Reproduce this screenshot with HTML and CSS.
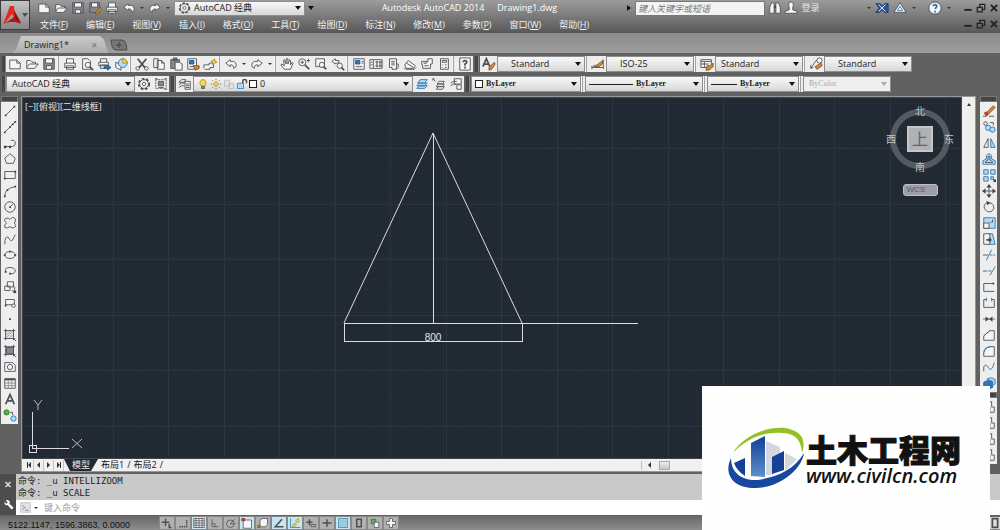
FILE: index.html
```html
<!DOCTYPE html>
<html lang="zh-CN">
<head>
    <meta charset="UTF-8">
    <meta name="viewport" content="width=device-width, initial-scale=1.0">
    <title>Autodesk AutoCAD 2014 Drawing1.dwg</title>
    <link rel="stylesheet" href="styles.css">
</head>
<body>
    <svg class="sprite" aria-hidden="true">
        <!-- file -->
        <symbol id="new" viewBox="0 0 16 16"><path class="w" d="M2 13.500V3.500H10L14 7V13.500Z"/><path d="M10 3.500V7H14"/></symbol>
        <symbol id="open" viewBox="0 0 16 16"><path class="w" d="M2 12V4H6L8 6H12V8M2 12L5 8H15L11 13H2Z"/></symbol>
        <symbol id="save" viewBox="0 0 16 16"><path class="g" d="M2 2H14V14H2Z"/><path class="w" d="M4 2H12V7H4ZM5 10H11V14H5Z"/></symbol>
        <symbol id="saveas" viewBox="0 0 16 16"><path class="g" d="M2 2H13V13H2Z"/><path class="w" d="M4 2H11V7H4Z"/><path class="o" d="M8 14L14 7L16 9L10 15Z"/></symbol>
        <symbol id="print" viewBox="0 0 16 16"><path class="w" d="M4 7V2H12V7M2 7H14V12H2ZM4 10H12V14H4Z"/></symbol>
        <symbol id="preview" viewBox="0 0 16 16"><path class="w" d="M3 14V2H9L12 5V14Z"/><circle class="w" cx="9" cy="9" r="3"/><path class="t" d="M11 11L15 15"/></symbol>
        <symbol id="publish" viewBox="0 0 16 16"><path class="w" d="M4 6V2H11V6M2 6H13V10H2ZM4 9H11V13H4Z"/><path class="bl" d="M8 11H12V9L16 12L12 15V13H8Z"/></symbol>
        <symbol id="globe" viewBox="0 0 16 16"><path class="w" d="M2 6L8 9V15L2 12Z"/><circle class="b" cx="10" cy="7" r="5"/><path class="y" d="M10 7V2A5 5 0 0 1 15 7Z"/></symbol>
        <!-- edit -->
        <symbol id="cut" viewBox="0 0 16 16"><path class="t" d="M3 2L12 13M13 2L4 13"/><circle class="w" cx="3" cy="13" r="2"/><circle class="w" cx="13" cy="13" r="2"/></symbol>
        <symbol id="copy" viewBox="0 0 16 16"><path class="w" d="M2 2H7V12H2ZM6 4H11L14 7V14H6Z"/><path d="M11 4V7H14"/></symbol>
        <symbol id="paste" viewBox="0 0 16 16"><path class="g" d="M2 3H12V13H2ZM5 1H9V4H5Z"/><path class="w" d="M7 6H12L15 8V15H7Z"/></symbol>
        <symbol id="match" viewBox="0 0 16 16"><path class="w" d="M2 2H12V14H2Z"/><path class="bl" d="M4 4H9V8H4Z"/><path d="M4 11H9"/><path class="o" d="M8 10H15V13L11 15Z"/></symbol>
        <symbol id="block" viewBox="0 0 16 16"><path class="w" d="M1 13V9H7V7H12V12H8V14H2"/><path class="y" d="M13 2L14 5L16 6L13 7L11 9L11 6L9 5L12 4Z"/></symbol>
        <symbol id="undo" viewBox="0 0 16 16"><path class="w" d="M2 7L7 3V5H11Q14 6 14 9Q14 12 11 13Q12 9 7 9V11Z"/></symbol>
        <symbol id="redo" viewBox="0 0 16 16"><path class="w" d="M14 7L9 3V5H5Q2 6 2 9Q2 12 5 13Q4 9 9 9V11Z"/></symbol>
        <symbol id="pan" viewBox="0 0 16 16"><path class="w" d="M5 14L1 9L2 8L5 10L4 4L5 3L7 8V2H9V8L11 3L12 4V9L14 6L15 7L12 14Z"/></symbol>
        <symbol id="zoom" viewBox="0 0 16 16"><circle class="w" cx="6" cy="6" r="4"/><path class="t" d="M9 9L14 14"/><path d="M4 6H8M6 4V8M11 4H15M13 2V6"/></symbol>
        <symbol id="zoomwin" viewBox="0 0 16 16"><path class="w" d="M2 2H12V11H2Z"/><circle class="w" cx="9" cy="9" r="3"/><path class="t" d="M11 11L14 14"/></symbol>
        <symbol id="zoomprev" viewBox="0 0 16 16"><path class="w" d="M1 5L5 2V4H9V7H5V8Z"/><circle class="w" cx="10" cy="10" r="3"/><path class="t" d="M12 12L15 15"/></symbol>
        <!-- palettes -->
        <symbol id="props" viewBox="0 0 16 16"><path class="w" d="M2 2H14V14H2Z"/><path class="bl" d="M4 4H9V8H4Z"/><path d="M4 11H12M11 5H13M11 7H13"/></symbol>
        <symbol id="dcenter" viewBox="0 0 16 16"><path class="w" d="M1 3H15V13H1Z"/><path d="M5 3V13M8 5H10V7H8ZM12 5H14V7H12ZM8 9H10V11H8ZM12 9H14V11H12ZM2 6H4M2 9H4"/></symbol>
        <symbol id="tools" viewBox="0 0 16 16"><path class="w" d="M4 2H12V14H7V12H4Z"/><path d="M6 5H10M6 7H10M6 9H10M12 8H14V12L12 14"/></symbol>
        <symbol id="sheets" viewBox="0 0 16 16"><path class="w" d="M2 9L6 4L14 10L12 13H4Z"/><path d="M4 7L12 12M1 12L3 14H13L15 12"/></symbol>
        <symbol id="markup" viewBox="0 0 16 16"><path class="w" d="M2 5H9V2H14V8H12V13H3V9H2Z"/><path d="M5 10H10M9 5L6 8M4 7H7"/></symbol>
        <symbol id="calc" viewBox="0 0 16 16"><path class="w" d="M4 2H13V14H4Z"/><path d="M6 4H11V6H6ZM6 9H7M9 9H11M6 12H7M9 12H11"/></symbol>
        <symbol id="help" viewBox="0 0 16 16"><path class="w" d="M2 1H14V15H2Z"/><path class="t" d="M6 6Q6 4 8 4Q10 4 10 6Q10 7 8 8V10M8 11V13"/></symbol>
        <symbol id="textstyle" viewBox="0 0 16 16"><path class="t" d="M1 11L5 2L9 11M3 8H7"/><path class="o" d="M8 12L14 6L15 8L11 14L8 15Z"/></symbol>
        <symbol id="dimstyle" viewBox="0 0 16 16"><path d="M1 12H14M1 10V14M14 3V14M2 11L5 9"/><path class="o" d="M4 11L11 6L13 4V8L9 11Z"/></symbol>
        <symbol id="tablestyle" viewBox="0 0 16 16"><path class="w" d="M1 3H13V12H1Z"/><path d="M1 5H13M1 8H10M5 5V12"/><path class="o" d="M8 10H12L15 7V11L10 15H7Z"/></symbol>
        <symbol id="leader" viewBox="0 0 16 16"><path d="M2 13L8 4H10M2 13V9M2 13L5 12"/><circle class="w" cx="12" cy="4" r="3"/><path class="o" d="M7 11L14 7L15 10L9 14Z"/></symbol>
        <!-- layers -->
        <symbol id="gear" viewBox="0 0 16 16"><circle cx="8" cy="8" r="6" stroke-dasharray="3 2" stroke-width="2"/><circle class="w" cx="8" cy="8" r="5"/><circle cx="8" cy="8" r="2"/></symbol>
        <symbol id="wsave" viewBox="0 0 16 16"><path stroke-dasharray="2 1" d="M2 3H14V13H2Z"/><path class="g" d="M5 5H11V10H5Z"/><path d="M1 2H4M12 2H15M12 14H15M5 12H11"/></symbol>
        <symbol id="layers" viewBox="0 0 16 16"><path class="w" d="M1 6L4 3H9L7 6ZM1 9L4 7H8M1 12L4 10H7M8 5H14V14H8Z"/><path d="M9 8H13M9 10H13M9 12H13"/></symbol>
        <symbol id="bulb" viewBox="0 0 16 16"><path class="y" d="M6 11Q3 8 4 5Q5 2 8 2Q11 2 12 5Q13 8 10 11Z"/><path class="g" d="M6 11H10V14H6Z"/></symbol>
        <symbol id="sun" viewBox="0 0 16 16"><circle class="y" cx="8" cy="8" r="3"/><path d="M8 1V3M8 13V15M1 8H3M13 8H15M3 3L4 4M12 12L13 13M13 3L12 4M3 13L4 12"/></symbol>
        <symbol id="vpfreeze" viewBox="0 0 16 16"><path class="f" d="M2 3H9V11H2ZM8 7H14V14H8Z"/></symbol>
        <symbol id="lock" viewBox="0 0 16 16"><path class="b" d="M2 7H10V14H2Z"/><path class="t" d="M9 7V4Q9 2 11 2Q14 2 14 4V7"/></symbol>
        <symbol id="layset" viewBox="0 0 16 16"><path class="b" d="M2 13L5 10H14L11 13ZM2 10L5 7H14L11 10ZM3 7L6 3H14L11 7Z"/></symbol>
        <symbol id="layprev" viewBox="0 0 16 16"><path class="w" d="M5 14L7 11H14L12 14ZM5 11L7 8H14L12 11ZM6 8L8 5H14L12 8Z"/><path d="M1 2L4 5M1 2V4M1 2H3"/></symbol>
        <symbol id="laystate" viewBox="0 0 16 16"><path class="w" d="M2 7L5 5H9M2 10L5 8H8M6 2H14V8H6ZM9 9H14V14H9Z"/></symbol>
        <!-- draw -->
        <symbol id="line" viewBox="0 0 16 16"><path d="M3 13L13 3"/><path class="d" d="M2 12H4V14H2ZM12 2H14V4H12Z"/></symbol>
        <symbol id="xline" viewBox="0 0 16 16"><path d="M2 14L14 2"/><path class="d" d="M1 13H3V15H1ZM7 7H9V9H7ZM13 1H15V3H13ZM10 4H12V6H10Z"/></symbol>
        <symbol id="pline" viewBox="0 0 16 16"><path d="M2 12H11Q14 12 14 8Q14 4 9 5"/><path class="d" d="M1 11H4V14H1ZM7 11H9V14H7Z"/></symbol>
        <symbol id="polygon" viewBox="0 0 16 16"><path d="M8 2L14 7L12 13H4L2 7Z"/></symbol>
        <symbol id="rect" viewBox="0 0 16 16"><path d="M2 4H14V12H2Z"/><path class="d" d="M1 11H3V13H1ZM13 3H15V5H13Z"/></symbol>
        <symbol id="arc" viewBox="0 0 16 16"><path d="M2 14Q2 5 14 3"/><path class="d" d="M1 13H3V15H1ZM4 6H6V8H4ZM13 2H15V4H13Z"/></symbol>
        <symbol id="circle" viewBox="0 0 16 16"><circle cx="8" cy="8" r="6"/><path d="M8 8L12 4"/><path class="d" d="M7 7H9V9H7Z"/></symbol>
        <symbol id="cloud" viewBox="0 0 16 16"><path d="M8 4Q11 0 14 3Q15 6 13 8Q16 12 13 13Q10 15 8 12Q4 15 2 13Q1 10 4 8Q0 4 3 3Q6 1 8 4Z"/></symbol>
        <symbol id="spline" viewBox="0 0 16 16"><path d="M2 14Q2 4 6 6Q9 12 11 9L14 3"/></symbol>
        <symbol id="ellipse" viewBox="0 0 16 16"><ellipse cx="8" cy="8" rx="6" ry="4"/><path class="d" d="M1 7H3V9H1ZM7 3H9V5H7ZM13 7H15V9H13Z"/></symbol>
        <symbol id="earc" viewBox="0 0 16 16"><path d="M3 9Q1 4 8 4Q14 4 14 8Q13 12 8 11"/><path class="d" d="M7 10H9V12H7ZM2 8H4V10H2Z"/></symbol>
        <symbol id="insert" viewBox="0 0 16 16"><path class="w" d="M5 2H12V8H5ZM2 7H8V12H2Z"/><path d="M11 6Q15 8 13 12M10 12L14 14"/><path class="d" d="M12 12H15V15H12Z"/></symbol>
        <symbol id="makeblock" viewBox="0 0 16 16"><path class="w" d="M3 11V4H13V10H3"/><circle class="w" cx="12" cy="11" r="2"/><path class="d" d="M2 10H4V12H2Z"/></symbol>
        <symbol id="point" viewBox="0 0 16 16"><path class="d" d="M7 7H9V9H7Z"/></symbol>
        <symbol id="hatch" viewBox="0 0 16 16"><path class="f" d="M3 3H12V12H3Z"/><path d="M3 1V14M12 1V14M1 3H14M1 12H14M12 12L15 15"/><path stroke="#999" d="M4 8L8 4M4 11L11 4M8 11L11 8"/></symbol>
        <symbol id="gradient" viewBox="0 0 16 16"><path class="g" d="M4 4H12V11H4Z"/><path d="M3 1V14M12 1V14M1 3H14M1 12H14M12 12L15 15"/></symbol>
        <symbol id="region" viewBox="0 0 16 16"><path class="w" d="M2 13V3H11L14 6V13Z"/><circle class="w" cx="8" cy="8" r="3"/></symbol>
        <symbol id="table" viewBox="0 0 16 16"><path class="w" d="M2 3H14V14H2Z"/><path stroke-width="2" d="M2 4H14"/><path stroke="#888" d="M2 8H14M2 11H14M6 5V14M10 5V14"/></symbol>
        <symbol id="mtext" viewBox="0 0 16 16"><path stroke-width="2" d="M3 14L8 3L13 14M5 10H11"/></symbol>
        <symbol id="addsel" viewBox="0 0 16 16"><circle class="gr" cx="4" cy="5" r="3"/><circle class="b" cx="12" cy="12" r="3"/><path d="M8 5H11V8"/></symbol>
        <!-- modify -->
        <symbol id="erase" viewBox="0 0 16 16"><path class="o" d="M4 11L13 2L15 4L7 12Z"/><path class="r" d="M3 10L5 9L7 11L6 13L4 13Z"/><path d="M1 14H5M8 14H14"/></symbol>
        <symbol id="copies" viewBox="0 0 16 16"><circle class="b" cx="7" cy="9" r="3"/><circle class="b" cx="12" cy="11" r="3"/><circle cx="4" cy="4" r="2"/><path d="M9 3H13V6"/></symbol>
        <symbol id="mirror" viewBox="0 0 16 16"><path class="w" d="M7 3V13H2Z"/><path class="b" d="M10 3V13H15Z"/></symbol>
        <symbol id="offset" viewBox="0 0 16 16"><path class="b" d="M1 14V10L5 8V4Q8 0 11 4V8L15 10V14Z"/><path d="M4 12V11L7 9V5H9V9L12 11V12Z"/></symbol>
        <symbol id="array" viewBox="0 0 16 16"><path class="b" d="M2 2H7V7H2ZM10 2H15V7H10ZM2 10H7V15H2Z"/><path class="b" d="M10 10H13V13H10Z"/><path class="d" d="M13 13H16V16H13Z"/></symbol>
        <symbol id="move" viewBox="0 0 16 16"><path d="M8 2V14M2 8H14"/><path class="d" d="M8 0L11 4H5ZM8 16L11 12H5ZM0 8L4 5V11ZM16 8L12 5V11Z"/></symbol>
        <symbol id="rotate" viewBox="0 0 16 16"><path d="M6 3Q1 5 3 10Q6 15 11 13Q15 10 13 6Q12 4 9 3"/><path class="d" d="M5 1L10 3L6 6Z"/></symbol>
        <symbol id="scale" viewBox="0 0 16 16"><path class="b" d="M2 2H15V14H2Z"/><path class="w" d="M2 8H8V14H2ZM9 7H12V4"/></symbol>
        <symbol id="stretch" viewBox="0 0 16 16"><path class="b" d="M7 2H12L15 14H7Z"/><path class="w" d="M2 2H9V14H2Z"/><path class="t" d="M5 9H10M8 7L10 9L8 11"/></symbol>
        <symbol id="trim" viewBox="0 0 16 16"><path d="M1 8H7"/><path class="bs" d="M5 14L11 2"/><path class="bs" d="M9 8H15" stroke-dasharray="3 1"/></symbol>
        <symbol id="extend" viewBox="0 0 16 16"><path d="M1 8H6"/><path class="bs" d="M7 8H11M9 13L15 3"/></symbol>
        <symbol id="break1" viewBox="0 0 16 16"><path d="M13 4H2V13H14"/><path class="d" d="M12 3H14V5H12Z"/></symbol>
        <symbol id="break2" viewBox="0 0 16 16"><path d="M5 4H2V13H14V4H11"/><path class="bs" d="M5 2V6M11 2V6"/></symbol>
        <symbol id="join" viewBox="0 0 16 16"><path class="bs" d="M1 8H15"/><path class="d" d="M4 5L8 8L4 11ZM12 5L8 8L12 11Z"/></symbol>
        <symbol id="chamfer" viewBox="0 0 16 16"><path class="w" d="M2 14V9L9 3H14V14Z"/><path class="bs" d="M2 9L9 3"/></symbol>
        <symbol id="fillet" viewBox="0 0 16 16"><path class="w" d="M2 14V10Q3 3 11 3H14V14Z"/><path class="bs" d="M2 10Q3 3 11 3"/></symbol>
        <symbol id="blend" viewBox="0 0 16 16"><path d="M2 13V8Q4 4 6 7"/><path class="bs" d="M6 7Q9 13 12 9L14 3"/></symbol>
        <symbol id="explode" viewBox="0 0 16 16"><path class="bl" d="M2 7L7 5L12 7V13L7 15L2 13Z"/><path class="b" d="M6 3L11 2L15 4V9L12 11V6L6 4Z"/></symbol>
        <symbol id="order" viewBox="0 0 16 16"><path class="w" d="M2 8H9V14H14V8H11V2H6V8"/></symbol>
        <!-- info center -->
        <symbol id="binoc" viewBox="0 0 16 16"><path class="w" d="M2 14V7L4 2H7V14ZM9 14V2H12L14 7V14Z"/><path class="d" d="M7 5H9V8H7Z"/></symbol>
        <symbol id="user" viewBox="0 0 16 16"><path class="w" d="M1 14V12L6 10V8Q4 1 8 1Q12 1 10 8V10L15 12V14Z"/></symbol>
        <symbol id="exchange" viewBox="0 0 16 16"><path class="navy" d="M1 3H6L8 6L11 3H15V13H11L8 10L5 13H1L5 8Z"/><path stroke="#fff" d="M4 4L12 12M12 4L4 12"/></symbol>
        <symbol id="a360" viewBox="0 0 16 16"><path class="w" d="M8 2L15 13H1Z"/><path class="bs" d="M8 6L11 11H5Z"/></symbol>
        <symbol id="qmark" viewBox="0 0 16 16"><circle class="w" cx="8" cy="8" r="7"/><path class="bs" stroke-width="2" d="M6 6Q6 4 8 4Q10 4 10 6Q10 7 8 9M8 11V13"/></symbol>
        <symbol id="min" viewBox="0 0 16 16"><path stroke-width="3" d="M2 11H14"/></symbol>
        <symbol id="restore" viewBox="0 0 16 16"><path stroke-width="2" d="M2 7H10V14H2ZM6 6V2H14V10H11"/></symbol>
        <symbol id="close" viewBox="0 0 16 16"><path stroke-width="3" d="M3 3L13 13M13 3L3 13"/></symbol>
        <symbol id="wrench" viewBox="0 0 16 16"><path fill="#fff" stroke="none" d="M2 4L5 7L7 5L4 2Q8 0 10 4Q10 6 9 7L15 12Q15 15 12 15L7 9Q2 10 2 4Z"/></symbol>
        <symbol id="prompt" viewBox="0 0 16 16"><path class="f" d="M1 1H15V15H1Z"/><path stroke="#446" d="M4 5L7 8L4 11M8 12H12"/></symbol>
        <!-- status -->
        <symbol id="infer" viewBox="0 0 16 16"><path class="t" d="M6 2V12M1 7H11M11 9V14H14"/></symbol>
        <symbol id="snap" viewBox="0 0 16 16"><path class="t" d="M3 13H13V4" stroke-dasharray="2 1"/></symbol>
        <symbol id="gridi" viewBox="0 0 16 16"><path class="w" d="M1 2H15V14H1Z"/><path d="M1 5H15M1 8H15M1 11H15M4 2V14M8 2V14M12 2V14"/></symbol>
        <symbol id="ortho" viewBox="0 0 16 16"><path d="M4 3V13H13M4 9H8V13"/></symbol>
        <symbol id="polar" viewBox="0 0 16 16"><circle cx="7" cy="9" r="5"/><path d="M7 9L13 3M7 9H14"/></symbol>
        <symbol id="osnap" viewBox="0 0 16 16"><path class="w" d="M3 4H14V15H3Z"/><path class="r" d="M1 2H5V5H1Z"/></symbol>
        <symbol id="osnap3" viewBox="0 0 16 16"><path class="w" d="M4 4L7 2H14V10L11 13H4Z"/><path class="o" d="M1 11H4V14H1Z"/></symbol>
        <symbol id="otrack" viewBox="0 0 16 16"><path class="t" d="M12 3L3 13H14"/></symbol>
        <symbol id="ducs" viewBox="0 0 16 16"><path class="bs" d="M2 2V14H15"/><path class="y" d="M4 12L8 8L10 10L6 13ZM9 5L12 2L14 5L11 8Z"/></symbol>
        <symbol id="dyn" viewBox="0 0 16 16"><path class="t" d="M6 3V11M2 7H10"/><path d="M8 10H14V13H8Z"/></symbol>
        <symbol id="lwt" viewBox="0 0 16 16"><path stroke-width="2" d="M8 3V13M2 8H14"/></symbol>
        <symbol id="tpy" viewBox="0 0 16 16"><path class="b" d="M2 2H14V14H2Z"/><path d="M2 5H14M2 8H14M2 11H14M5 2V14M8 2V14M11 2V14" stroke="#8bc"/></symbol>
        <symbol id="qp" viewBox="0 0 16 16"><path class="t" d="M5 3H11V13H5Z"/></symbol>
        <symbol id="sc" viewBox="0 0 16 16"><path class="gr" d="M3 3H9V9H3Z"/><path class="w" d="M7 7H13V14H7Z"/></symbol>
        <symbol id="am" viewBox="0 0 16 16"><path class="w" d="M6 2H10V6H14V10H10V14H6V10H2V6H6Z"/></symbol>
    </svg>

    <header class="titlebar">
        <button class="app-btn" aria-label="应用程序">
            <svg class="app-logo" viewBox="0 0 18 20"><path fill="#8e0f0c" d="M9 1L18 18L12 15L9 8Z"/><path fill="#e3291d" d="M7 1H11L12 13L9 9L1 19Q0 19 1 17Z"/><path fill="#b8150f" d="M1 19L11 12L18 19L12 17H6Z"/></svg>
            <span class="caret blue"></span>
        </button>
        <div class="title-rows">
            <div class="title-row">
                <div class="quick">
                    <button aria-label="新建"><svg><use href="#new"/></svg></button>
                    <button aria-label="打开"><svg><use href="#open"/></svg></button>
                    <button aria-label="保存"><svg><use href="#save"/></svg></button>
                    <button aria-label="另存为"><svg><use href="#saveas"/></svg></button>
                    <button aria-label="打印"><svg><use href="#print"/></svg></button>
                    <button aria-label="放弃"><svg><use href="#undo"/></svg></button>
                    <span class="drop"></span>
                    <button aria-label="重做"><svg><use href="#redo"/></svg></button>
                    <span class="drop"></span>
                </div>
                <div class="combo title-combo">
                    <svg><use href="#gear"/></svg>
                    <select aria-label="工作空间"><option>AutoCAD 经典</option></select>
                </div>
                <button class="more" aria-label="自定义"><span class="caret"></span></button>
                <h1><span>Autodesk AutoCAD 2014</span><span>Drawing1.dwg</span></h1>
                <span class="play"></span>
                <input class="search" type="text" placeholder="键入关键字或短语" aria-label="键入关键字或短语">
                <div class="info">
                    <button aria-label="搜索"><svg><use href="#binoc"/></svg></button>
                    <button class="login"><svg><use href="#user"/></svg>登录</button>
                    <span class="drop push"></span>
                    <button aria-label="Exchange"><svg><use href="#exchange"/></svg></button>
                    <button aria-label="A360"><svg><use href="#a360"/></svg></button>
                    <span class="drop"></span>
                    <button class="help" aria-label="帮助"><svg><use href="#qmark"/></svg></button>
                    <span class="drop"></span>
                </div>
                <div class="win">
                    <button aria-label="最小化"><svg><use href="#min"/></svg></button>
                    <button aria-label="还原"><svg><use href="#restore"/></svg></button>
                    <button aria-label="关闭"><svg><use href="#close"/></svg></button>
                </div>
            </div>
            <div class="title-row">
                <nav class="menu">
                    <button>文件(<u>F</u>)</button>
                    <button>编辑(<u>E</u>)</button>
                    <button>视图(<u>V</u>)</button>
                    <button>插入(<u>I</u>)</button>
                    <button>格式(<u>O</u>)</button>
                    <button>工具(<u>T</u>)</button>
                    <button>绘图(<u>D</u>)</button>
                    <button>标注(<u>N</u>)</button>
                    <button>修改(<u>M</u>)</button>
                    <button>参数(<u>P</u>)</button>
                    <button>窗口(<u>W</u>)</button>
                    <button>帮助(<u>H</u>)</button>
                </nav>
                <div class="win">
                    <button aria-label="最小化图形"><svg><use href="#min"/></svg></button>
                    <button aria-label="还原图形"><svg><use href="#restore"/></svg></button>
                    <button aria-label="关闭图形"><svg><use href="#close"/></svg></button>
                </div>
            </div>
        </div>
    </header>

    <div class="file-tabs">
        <div class="file-tab"><a href="#model">Drawing1*</a><button aria-label="关闭">✕</button></div>
        <button class="add-tab" aria-label="新图形"><svg viewBox="0 0 18 12"><path fill="#777" stroke="#4c4c4c" d="M1 1H12Q15 1 16 5L17 11H6Q3 11 2 7Z"/><path stroke="#444" fill="none" d="M6 6H12M9 3V9"/></svg></button>
    </div>

    <div class="toolbars">
        <div class="toolbar">
            <span class="grip"></span>
            <div class="tools">
                <button aria-label="新建"><svg><use href="#new"/></svg></button>
                <button aria-label="打开"><svg><use href="#open"/></svg></button>
                <button aria-label="保存"><svg><use href="#save"/></svg></button>
                <span class="sep"></span>
                <button aria-label="打印"><svg><use href="#print"/></svg></button>
                <button aria-label="预览"><svg><use href="#preview"/></svg></button>
                <button aria-label="发布"><svg><use href="#publish"/></svg></button>
                <button aria-label="3DDWF"><svg><use href="#globe"/></svg></button>
                <span class="sep"></span>
                <button aria-label="剪切"><svg><use href="#cut"/></svg></button>
                <button aria-label="复制"><svg><use href="#copy"/></svg></button>
                <button aria-label="粘贴"><svg><use href="#paste"/></svg></button>
                <button aria-label="特性匹配"><svg><use href="#match"/></svg></button>
                <button aria-label="块编辑器"><svg><use href="#block"/></svg></button>
                <span class="sep"></span>
                <button aria-label="放弃"><svg><use href="#undo"/></svg></button>
                <span class="drop"></span>
                <button aria-label="重做"><svg><use href="#redo"/></svg></button>
                <span class="drop"></span>
                <span class="sep"></span>
                <button aria-label="平移"><svg><use href="#pan"/></svg></button>
                <button aria-label="实时缩放"><svg><use href="#zoom"/></svg></button>
                <button aria-label="窗口缩放"><svg><use href="#zoomwin"/></svg></button>
                <button aria-label="缩放上一个"><svg><use href="#zoomprev"/></svg></button>
                <span class="sep"></span>
                <button aria-label="特性"><svg><use href="#props"/></svg></button>
                <button aria-label="设计中心"><svg><use href="#dcenter"/></svg></button>
                <button aria-label="工具选项板"><svg><use href="#tools"/></svg></button>
                <button aria-label="图纸集"><svg><use href="#sheets"/></svg></button>
                <button aria-label="标记集"><svg><use href="#markup"/></svg></button>
                <button aria-label="计算器"><svg><use href="#calc"/></svg></button>
                <span class="sep"></span>
                <button aria-label="帮助"><svg><use href="#help"/></svg></button>
            </div>
            <span class="grip"></span>
            <div class="tools"><button aria-label="文字样式"><svg><use href="#textstyle"/></svg></button></div>
            <div class="combo style-combo pad"><select aria-label="文字样式"><option>Standard</option></select></div>
            <span class="sep"></span>
            <div class="tools"><button aria-label="标注样式"><svg><use href="#dimstyle"/></svg></button></div>
            <div class="combo style-combo pad"><select aria-label="标注样式"><option>ISO-25</option></select></div>
            <span class="sep"></span>
            <div class="tools"><button aria-label="表格样式"><svg><use href="#tablestyle"/></svg></button></div>
            <div class="combo style-combo"><select aria-label="表格样式"><option>Standard</option></select></div>
            <span class="sep"></span>
            <div class="tools"><button aria-label="多重引线样式"><svg><use href="#leader"/></svg></button></div>
            <div class="combo style-combo pad"><select aria-label="多重引线样式"><option>Standard</option></select></div>
        </div>
        <div class="toolbar">
            <span class="grip"></span>
            <div class="combo space-combo"><select aria-label="工作空间"><option>AutoCAD 经典</option></select></div>
            <div class="tools">
                <button aria-label="工作空间设置"><svg><use href="#gear"/></svg></button>
                <button aria-label="我的工作空间"><svg><use href="#wsave"/></svg></button>
            </div>
            <span class="grip"></span>
            <div class="tools"><button aria-label="图层特性"><svg><use href="#layers"/></svg></button></div>
            <div class="combo layer-combo">
                <svg><use href="#bulb"/></svg>
                <svg><use href="#sun"/></svg>
                <svg><use href="#vpfreeze"/></svg>
                <svg><use href="#lock"/></svg>
                <span class="swatch"></span>
                <select aria-label="图层"><option>0</option></select>
            </div>
            <div class="tools">
                <button aria-label="置为当前"><svg><use href="#layset"/></svg></button>
                <button aria-label="上一个图层"><svg><use href="#layprev"/></svg></button>
                <button aria-label="图层状态"><svg><use href="#laystate"/></svg></button>
            </div>
            <span class="grip"></span>
            <div class="combo color-combo serif"><span class="swatch"></span><select aria-label="颜色"><option>ByLayer</option></select></div>
            <span class="sep"></span>
            <div class="combo ltype-combo serif"><span class="rule long"></span><select aria-label="线型"><option>ByLayer</option></select></div>
            <span class="sep"></span>
            <div class="combo lweight-combo serif"><span class="rule"></span><select aria-label="线宽"><option>ByLayer</option></select></div>
            <span class="sep"></span>
            <div class="combo plot-combo serif off"><select aria-label="打印样式" disabled><option>ByColor</option></select></div>
        </div>
    </div>

    <main class="work">
        <div class="dock">
            <span class="handle"></span>
            <div class="palette">
                <button aria-label="直线"><svg><use href="#line"/></svg></button>
                <button aria-label="构造线"><svg><use href="#xline"/></svg></button>
                <button aria-label="多段线"><svg><use href="#pline"/></svg></button>
                <button aria-label="多边形"><svg><use href="#polygon"/></svg></button>
                <button aria-label="矩形"><svg><use href="#rect"/></svg></button>
                <button aria-label="圆弧"><svg><use href="#arc"/></svg></button>
                <button aria-label="圆"><svg><use href="#circle"/></svg></button>
                <button aria-label="修订云线"><svg><use href="#cloud"/></svg></button>
                <button aria-label="样条曲线"><svg><use href="#spline"/></svg></button>
                <button aria-label="椭圆"><svg><use href="#ellipse"/></svg></button>
                <button aria-label="椭圆弧"><svg><use href="#earc"/></svg></button>
                <button aria-label="插入块"><svg><use href="#insert"/></svg></button>
                <button aria-label="创建块"><svg><use href="#makeblock"/></svg></button>
                <button aria-label="点"><svg><use href="#point"/></svg></button>
                <button aria-label="图案填充"><svg><use href="#hatch"/></svg></button>
                <button aria-label="渐变色"><svg><use href="#gradient"/></svg></button>
                <button aria-label="面域"><svg><use href="#region"/></svg></button>
                <button aria-label="表格"><svg><use href="#table"/></svg></button>
                <button aria-label="多行文字"><svg><use href="#mtext"/></svg></button>
                <button aria-label="添加选定对象"><svg><use href="#addsel"/></svg></button>
            </div>
        </div>

        <section class="viewport" id="model">
            <div class="view-row">
                <div class="canvas">
                    <svg class="drawing">
                        <defs>
                            <pattern id="minor" x="3" y="6" width="11" height="11" patternUnits="userSpaceOnUse">
                                <path stroke="#242d37" d="M0 .5H11M.5 0V11"/>
                            </pattern>
                            <pattern id="major" x="35" y="51" width="111" height="111" patternUnits="userSpaceOnUse">
                                <path stroke="#2d3640" d="M0 .5H111M0 56.500H111M.5 0V111M56.500 0V111"/>
                            </pattern>
                        </defs>
                        <rect width="100%" height="100%" fill="url(#minor)"/>
                        <rect width="100%" height="100%" fill="url(#major)"/>
                        <g class="ink">
                            <path d="M322 226L411 36L500 226"/>
                            <path shape-rendering="crispEdges" d="M411 36V226M322 226H616M322 226V244H500V226"/>
                            <path d="M12 303L16 308L20 303M16 308V313M50 342L60 351M60 342L50 351" stroke-opacity=".8"/>
                            <path shape-rendering="crispEdges" d="M10 315V351M10 351H47M7 348H14V355H7Z"/>
                        </g>
                        <text class="dim" x="411" y="244">800</text>
                    </svg>
                    <span class="view-label">[−][俯视][二维线框]</span>
                    <div class="navcube">
                        <svg class="compass" viewBox="0 0 68 68">
                            <circle cx="34" cy="34" r="27" fill="none" stroke="#555961" stroke-width="6"/>
                            <path fill="#c6c6c6" d="M21 21H47V47H21Z"/>
                            <path fill="#b0b1b4" d="M23 23H45V45H23Z"/>
                            <g class="compass-text">
                                <text x="34" y="10">北</text>
                                <text x="34" y="66">南</text>
                                <text x="5" y="38">西</text>
                                <text x="63" y="38">东</text>
                            </g>
                            <text class="cube-text" x="34" y="40">上</text>
                        </svg>
                        <button class="wcs">WCS</button>
                    </div>
                </div>
                <div class="vscroll"><span class="up"></span></div>
            </div>
            <div class="layout-bar">
                <div class="layout-nav">
                    <button aria-label="第一个"><i class="bar"></i><i class="left"></i></button>
                    <button aria-label="上一个"><i class="left"></i></button>
                    <button aria-label="下一个"><i class="right"></i></button>
                    <button aria-label="最后"><i class="right"></i><i class="bar"></i></button>
                </div>
                <nav class="layouts">
                    <a class="active" href="#model">模型</a>
                    <a href="#layout1">布局1</a><span>/</span>
                    <a href="#layout2">布局2</a><span>/</span>
                </nav>
                <div class="hscroll"><button aria-label="向左"><i class="left"></i></button><span class="thumb"></span></div>
            </div>
        </section>

        <div class="dock">
            <span class="handle"></span>
            <div class="palette">
                <button aria-label="删除"><svg><use href="#erase"/></svg></button>
                <button aria-label="复制对象"><svg><use href="#copies"/></svg></button>
                <button aria-label="镜像"><svg><use href="#mirror"/></svg></button>
                <button aria-label="偏移"><svg><use href="#offset"/></svg></button>
                <button aria-label="阵列"><svg><use href="#array"/></svg></button>
                <button aria-label="移动"><svg><use href="#move"/></svg></button>
                <button aria-label="旋转"><svg><use href="#rotate"/></svg></button>
                <button aria-label="缩放"><svg><use href="#scale"/></svg></button>
                <button aria-label="拉伸"><svg><use href="#stretch"/></svg></button>
                <button aria-label="修剪"><svg><use href="#trim"/></svg></button>
                <button aria-label="延伸"><svg><use href="#extend"/></svg></button>
                <button aria-label="打断于点"><svg><use href="#break1"/></svg></button>
                <button aria-label="打断"><svg><use href="#break2"/></svg></button>
                <button aria-label="合并"><svg><use href="#join"/></svg></button>
                <button aria-label="倒角"><svg><use href="#chamfer"/></svg></button>
                <button aria-label="圆角"><svg><use href="#fillet"/></svg></button>
                <button aria-label="光顺曲线"><svg><use href="#blend"/></svg></button>
                <button aria-label="分解"><svg><use href="#explode"/></svg></button>
            </div>
            <span class="handle"></span>
            <div class="palette">
                <button aria-label="前置"><svg><use href="#order"/></svg></button>
                <button aria-label="后置"><svg><use href="#order"/></svg></button>
                <button aria-label="置于对象之上"><svg><use href="#order"/></svg></button>
                <button aria-label="置于对象之下"><svg><use href="#order"/></svg></button>
            </div>
        </div>
    </main>

    <section class="command">
        <div class="command-side">
            <button aria-label="关闭"><svg><use href="#close"/></svg></button>
            <button aria-label="自定义"><svg><use href="#wrench"/></svg></button>
        </div>
        <div class="command-main">
            <div class="history">
                <p>命令: _u INTELLIZOOM</p>
                <p>命令: _u SCALE</p>
            </div>
            <div class="prompt">
                <svg><use href="#prompt"/></svg>
                <span class="drop"></span>
                <input type="text" placeholder="键入命令" aria-label="键入命令">
            </div>
        </div>
    </section>

    <footer class="status">
        <span class="coords">5122.1147, 1596.3863, 0.0000</span>
        <div class="modes">
            <button aria-label="推断约束"><svg><use href="#infer"/></svg></button>
            <button aria-label="捕捉"><svg><use href="#snap"/></svg></button>
            <button class="on" aria-label="栅格"><svg><use href="#gridi"/></svg></button>
            <button aria-label="正交"><svg><use href="#ortho"/></svg></button>
            <button aria-label="极轴"><svg><use href="#polar"/></svg></button>
            <button class="on" aria-label="对象捕捉"><svg><use href="#osnap"/></svg></button>
            <button aria-label="三维对象捕捉"><svg><use href="#osnap3"/></svg></button>
            <button class="on" aria-label="对象追踪"><svg><use href="#otrack"/></svg></button>
            <button class="on" aria-label="动态UCS"><svg><use href="#ducs"/></svg></button>
            <button aria-label="动态输入"><svg><use href="#dyn"/></svg></button>
            <button aria-label="线宽"><svg><use href="#lwt"/></svg></button>
            <button class="on" aria-label="透明度"><svg><use href="#tpy"/></svg></button>
            <button aria-label="快捷特性"><svg><use href="#qp"/></svg></button>
            <button aria-label="选择循环"><svg><use href="#sc"/></svg></button>
            <button aria-label="注释监视器"><svg><use href="#am"/></svg></button>
        </div>
        <button class="clean" aria-label="全屏显示"><svg><use href="#qp"/></svg></button>
    </footer>

    <aside class="brand">
        <svg class="brand-logo" viewBox="0 0 76 62">
            <defs>
                <linearGradient id="tower" x1="0" y1="0" x2="0" y2="1">
                    <stop offset="0" stop-color="#123f98"/>
                    <stop offset="1" stop-color="#5e90cd"/>
                </linearGradient>
            </defs>
            <path fill="#d5d7dc" d="M38 14L52 20V28L45 31V48H38ZM57 26L69 32L57 44Z"/>
            <path fill="url(#tower)" d="M23 16L37 9V50L23 49Z"/>
            <path fill="#163f95" d="M6 36L17 31V49Q9 44 6 36ZM44 30L56 24V43L44 47Z"/>
            <path fill="#93c124" d="M5 26C14 10 38 -1 57 1C75 4 78 14 74 26C73 13 68 7 55 6C36 4 18 12 5 26Z"/>
            <path fill="#17479e" d="M3 31C3 46 14 54 30 53C49 50 66 43 76 26C74 42 52 61 27 61C6 61 -5 48 3 31Z"/>
        </svg>
        <div class="brand-text">
            <strong>土木工程网</strong>
            <a href="#brand">www.civilcn.com</a>
        </div>
    </aside>
</body>
</html>
```

FILE: styles.css
```css
* {
    box-sizing: border-box;
}

body {
    margin: 0;
    height: 100vh;
    display: flex;
    flex-direction: column;
    position: relative;
    overflow: hidden;
    background: #616161;
    color: #222;
    font-family: "Open Sans", "Noto Sans CJK SC", sans-serif;
    font-size: 9px;
    line-height: 12px;
}

button,
input,
select {
    font: inherit;
    color: inherit;
    margin: 0;
    padding: 0;
    border: none;
    background: none;
}

button {
    display: flex;
    align-items: center;
    justify-content: center;
    flex: none;
    cursor: pointer;
}

a {
    color: inherit;
    text-decoration: none;
}

.sprite {
    position: absolute;
    width: 0;
    height: 0;
}

/* icons */
svg {
    display: block;
    flex: none;
    width: 14px;
    height: 14px;
    fill: none;
    stroke: #4c4f55;
}

.w { fill: #f4f5f7; }
.g { fill: #85898f; }
.f { fill: #dfe2e6; stroke: #b3b7bc; }
.b { fill: #b5dcf6; stroke: #2874ad; }
.bl { fill: #2d78bb; stroke: #225788; }
.bs { stroke: #2874ad; }
.y { fill: #f5d64e; stroke: #a78b2c; }
.o { fill: #d98d37; stroke: #7b4b1c; }
.r { fill: #cf4a34; stroke: #8b2b1c; }
.gr { fill: #55b046; stroke: #2f7c25; }
.d { fill: #444; stroke: none; }
.t { stroke-width: 2; }
.navy { fill: #2b5596; stroke: #1c3767; }

.caret {
    border: 3px solid transparent;
    border-top: 4px solid #111;
    border-bottom: none;
}

.caret.blue {
    border-top-color: #34507c;
}

.drop {
    width: 9px;
    flex: none;
    display: flex;
    align-items: center;
    justify-content: center;
}

.drop::after {
    content: "";
    border: 2px solid transparent;
    border-top-color: #333;
    border-bottom: none;
}

/* title bar */
.titlebar {
    display: flex;
    height: 33px;
    flex: none;
    background: linear-gradient(#9c9c9c, #575757);
}

.app-btn {
    width: 30px;
    height: 30px;
    gap: 1px;
    background: linear-gradient(#c4c4c4, #888);
    border: 1px solid #3c3c3c;
}

.app-logo {
    width: 18px;
    height: 20px;
    stroke: none;
}

.title-rows {
    flex: 1;
    min-width: 0;
}

.title-row {
    display: flex;
    align-items: center;
    height: 16px;
}

.quick {
    display: flex;
    align-items: center;
    padding: 0 2px 0 5px;
}

.quick button {
    width: 17px;
}

.title-combo {
    width: 131px;
    height: 15px;
}

.title-combo svg {
    width: 13px;
}

.more {
    width: 11px;
}

h1 {
    flex: 1;
    display: flex;
    justify-content: center;
    gap: 13px;
    margin: 0;
    font-size: 9px;
    font-weight: 400;
    color: #fff;
    white-space: nowrap;
}

.play {
    border: 3px solid transparent;
    border-left: 4px solid #111;
    border-right: none;
    margin: 0 4px;
}

.search {
    width: 130px;
    height: 15px;
    padding: 0 2px;
    background: #f3f3f3;
    border: 1px solid #777;
}

.search::placeholder {
    color: #777;
    font-style: italic;
}

.info {
    display: flex;
    align-items: center;
    width: 188px;
    padding-left: 1px;
}

.info button {
    width: 18px;
}

.info .login {
    width: 36px;
    gap: 3px;
    color: #e8e8e8;
}

.info .push {
    margin-left: auto;
}

.info .help {
    margin-left: 8px;
}

.win {
    display: flex;
    margin-left: auto;
}

.win button {
    width: 13px;
}

.win svg {
    width: 10px;
    height: 10px;
    stroke: #222;
}

.title-row .info + .win {
    margin-left: 8px;
}

.menu {
    display: flex;
    gap: 18px;
    padding: 2px 0 0 10px;
    color: #f2f2f2;
}

/* file tabs */
.file-tabs {
    display: flex;
    align-items: flex-end;
    height: 20px;
    flex: none;
    padding-left: 12px;
    background: linear-gradient(#8b8b8b, #9e9e9e);
}

.file-tab {
    display: flex;
    align-items: center;
    justify-content: space-between;
    width: 96px;
    height: 17px;
    padding: 0 10px 0 12px;
    background: linear-gradient(#cacaca, #adadad);
    clip-path: polygon(0 100%, 4px 80%, 9px 0, 88px 0, 92px 20%, 100% 100%);
}

.file-tab button {
    color: #777;
    font-size: 8px;
}

.add-tab {
    margin: 0 0 2px 2px;
}

.add-tab svg {
    width: 18px;
    height: 12px;
}

/* toolbars */
.toolbars {
    display: flex;
    flex-direction: column;
    gap: 4px;
    padding: 3px 2px 4px;
    flex: none;
}

.toolbar {
    display: flex;
    height: 16px;
}

.grip {
    width: 4px;
    margin: 0 1px 0 2px;
    flex: none;
    background: #464646;
    border-right: 1px solid #858585;
}

.grip:first-child {
    margin: 0;
}

.tools {
    display: flex;
    align-items: stretch;
    background: #ededed;
}

.tools button {
    width: 17px;
}

.sep {
    width: 4px;
    flex: none;
    background: #ededed;
    border-left: 1px solid #f8f8f8;
    box-shadow: inset 1px 0 #a2a2a2;
}

.combo {
    display: flex;
    align-items: center;
    gap: 1px;
    padding: 0 3px;
    background: linear-gradient(#f8f8f8, #d8d8d8);
    border: 1px solid #8d8d8d;
}

.combo select {
    flex: 1;
    min-width: 0;
    height: 12px;
    padding: 0 2px;
    appearance: none;
    outline: none;
}

.combo::after {
    content: "";
    flex: none;
    border: 3px solid transparent;
    border-top: 4px solid #111;
    border-bottom: none;
}

.style-combo {
    width: 88px;
}

.style-combo.pad {
    padding-left: 11px;
}

.space-combo {
    width: 129px;
}

.layer-combo {
    width: 220px;
}

.layer-combo svg {
    width: 12px;
    height: 12px;
}

.color-combo {
    width: 110px;
}

.ltype-combo {
    width: 118px;
}

.lweight-combo {
    width: 92px;
}

.plot-combo {
    width: 88px;
}

.swatch {
    width: 8px;
    height: 8px;
    background: #fff;
    border: 1px solid #222;
}

.rule {
    width: 26px;
    height: 1px;
    background: #222;
}

.rule.long {
    width: 44px;
}

.serif {
    font-family: "Liberation Serif", serif;
    font-size: 8px;
    font-weight: 700;
}

.off {
    background: #efefef;
    color: #888;
    font-weight: 400;
}

.off::after {
    border-top-color: #aaa;
}

/* work area */
.work {
    flex: 1;
    min-height: 0;
    display: flex;
    padding: 0 3px 0 1px;
}

.dock {
    flex: none;
    width: 17px;
}

.handle {
    display: block;
    height: 6px;
    background: #454545;
    border: 1px solid #777;
}

.palette {
    background: #eee;
    padding: 1px 0;
}

.palette button {
    width: 17px;
    height: 16px;
}

.viewport {
    flex: 1;
    min-width: 0;
    display: flex;
    flex-direction: column;
    margin: 0 4px 2px 3px;
    border: 1px solid #989898;
}

.view-row {
    flex: 1;
    min-height: 0;
    display: flex;
}

.canvas {
    flex: 1;
    position: relative;
    background: #212933;
    overflow: hidden;
}

.drawing {
    position: absolute;
    inset: 0;
    width: 100%;
    height: 100%;
}

.ink {
    stroke: #dadcdf;
}

.dim {
    fill: #e2e4e6;
    stroke: none;
    font-family: "Liberation Sans", sans-serif;
    font-size: 10px;
    text-anchor: middle;
}

.view-label {
    position: absolute;
    top: 4px;
    left: 3px;
    color: #e6e6e6;
}

.navcube {
    position: absolute;
    top: 8px;
    right: 8px;
    display: flex;
    flex-direction: column;
    align-items: center;
    gap: 11px;
}

.compass {
    width: 68px;
    height: 68px;
    stroke: none;
    overflow: visible;
}

.compass text {
    text-anchor: middle;
}

.compass-text {
    fill: #c0c2c5;
    font-size: 10px;
}

.cube-text {
    fill: #5d6477;
    font-size: 16px;
}

.wcs {
    width: 35px;
    height: 12px;
    justify-content: flex-start;
    padding-left: 3px;
    background: #9c9da8;
    border: 1px solid #bdbec6;
    border-radius: 3px;
    color: #555866;
    font-family: "Liberation Sans", sans-serif;
    font-size: 8px;
}

.vscroll {
    width: 13px;
    display: flex;
    justify-content: center;
    background: #efefef;
}

.up {
    height: 3px;
    margin-top: 6px;
    border: 2px solid transparent;
    border-bottom: 3px solid #333;
    border-top: none;
}

.layout-bar {
    display: flex;
    align-items: center;
    height: 12px;
    background: #f0f0f0;
}

.layout-nav {
    display: flex;
    padding-left: 2px;
}

.layout-nav button {
    width: 10px;
    height: 11px;
    border-right: 1px solid #c4c4c4;
}

.left,
.right {
    border: 3px solid transparent;
}

.left {
    border-right: 3px solid #333;
    border-left: none;
}

.right {
    border-left: 3px solid #333;
    border-right: none;
}

.bar {
    width: 1px;
    height: 6px;
    background: #333;
}

.layouts {
    display: flex;
    flex: 1;
    gap: 3px;
    color: #111;
}

.layouts .active {
    padding: 0 8px;
    background: #212933;
    color: #e6e6e6;
    clip-path: polygon(0 0, 100% 0, 27px 100%, 6px 100%);
}

.hscroll {
    display: flex;
    align-items: center;
    gap: 3px;
    width: 35%;
    height: 100%;
}

.hscroll button {
    width: 15px;
    height: 9px;
    border-left: 1px solid #c0c0c0;
}

.thumb {
    width: 11px;
    height: 9px;
    background: linear-gradient(#eee, #c6c6c6);
    border: 1px solid #aaa;
}

/* command line */
.command {
    flex: none;
    display: flex;
    padding-bottom: 1px;
}

.command-side {
    width: 16px;
    display: flex;
    flex-direction: column;
    align-items: center;
    justify-content: space-around;
    background: #4d4d4d;
}

.command-side svg {
    width: 11px;
    height: 11px;
    stroke: #ddd;
}

.command-side button:first-child svg {
    width: 8px;
}

.command-main {
    flex: 1;
}

.history {
    padding: 1px 2px;
    background: #c9c9c9;
    font-family: "DejaVu Sans Mono", "Noto Sans CJK SC", monospace;
}

.history p {
    margin: 0;
    line-height: 12px;
    height: 12px;
}

.prompt {
    display: flex;
    align-items: center;
    height: 15px;
    padding-left: 4px;
    background: #fff;
}

.prompt svg {
    width: 11px;
    height: 11px;
}

.prompt input {
    flex: 1;
    padding-left: 4px;
    outline: none;
}

.prompt input::placeholder {
    color: #a0a0a0;
}

/* status bar */
.status {
    flex: none;
    display: flex;
    align-items: center;
    height: 14px;
    background: linear-gradient(#686868, #8d8d8d);
}

.coords {
    width: 159px;
    padding: 3px 0 0 8px;
    font-family: "Liberation Sans", sans-serif;
    color: #111;
}

.modes {
    display: flex;
}

.modes button {
    width: 16px;
    height: 14px;
    background: #b0b0b0;
    border: 1px solid #888;
}

.modes .on {
    background: #c3e7f1;
}

.modes svg {
    width: 12px;
    height: 12px;
}

.clean {
    width: 10px;
    height: 12px;
    margin-left: auto;
    background: #ddd;
}

/* site badge over the lower right corner */
.brand {
    position: absolute;
    right: 10px;
    bottom: 0;
    display: flex;
    gap: 2px;
    width: 288px;
    height: 144px;
    padding: 41px 0 0 26px;
    background: #fefefe;
    color: #111;
}

.brand-logo {
    width: 76px;
    height: 62px;
    stroke: none;
}

.brand-text {
    padding-top: 8px;
}

.brand-text strong {
    display: block;
    font-size: 31px;
    line-height: 30px;
    font-weight: 900;
    -webkit-text-stroke: 1px #111;
}

.brand-text a {
    display: block;
    font-size: 20px;
    line-height: 22px;
    font-style: italic;
    font-weight: 600;
}
```
